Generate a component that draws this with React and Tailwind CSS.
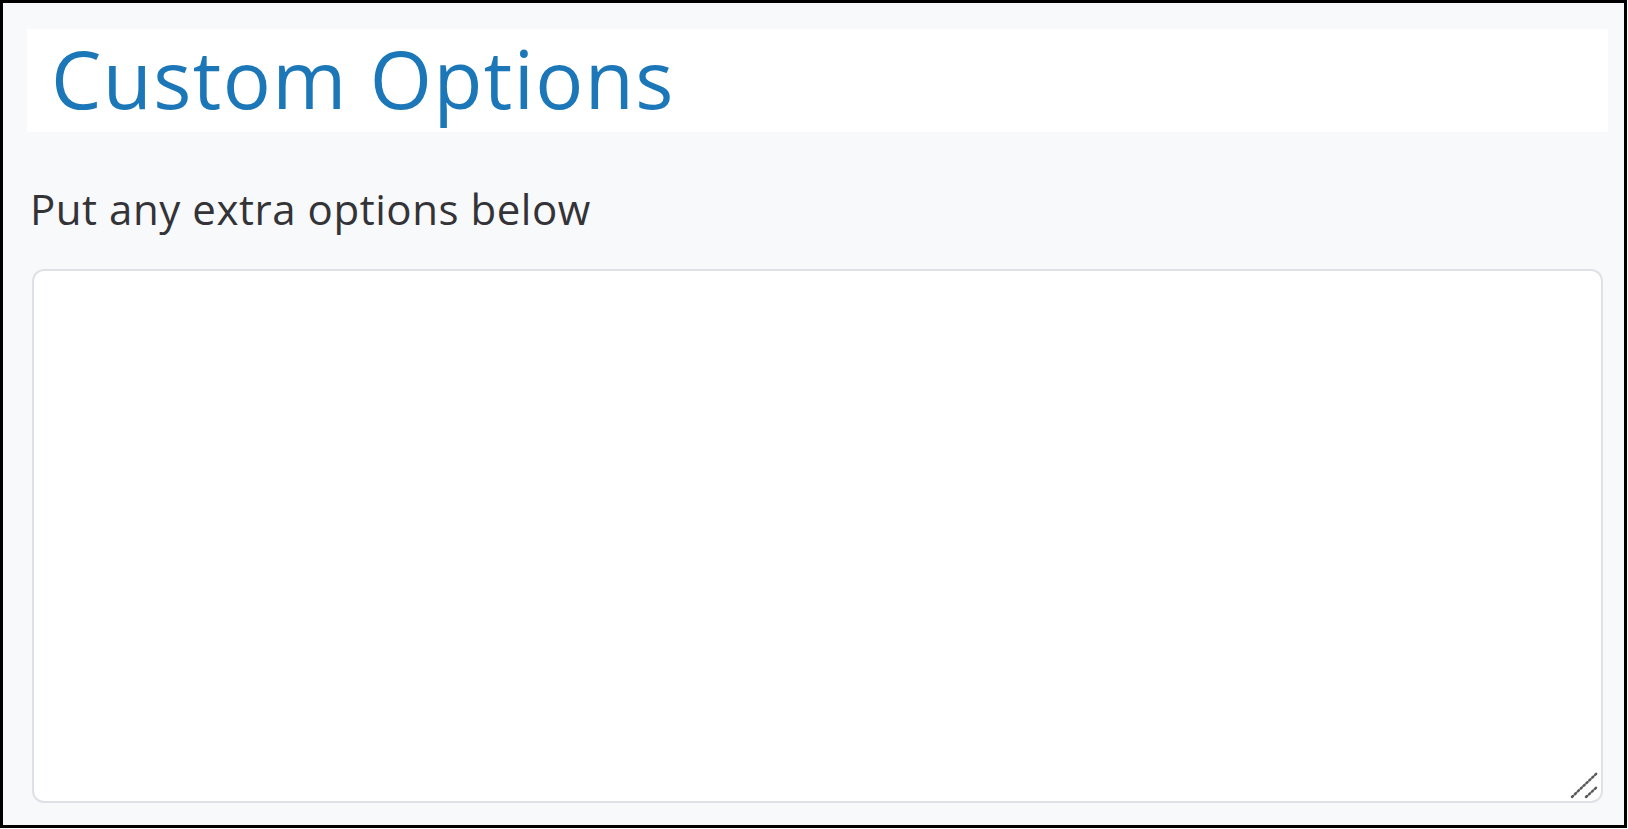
export default function App() {
  return (
    <div className="w-[1627px] h-[828px] border-[3px] border-black bg-[#f8f9fa] flex flex-col font-['Open_Sans',sans-serif]">
      {/* section heading */}
      <div className="mt-[26px] ml-[24px] mr-[16px] h-[103px] bg-white flex items-center pl-[24px] pb-[6px]">
        <h2 className="text-[80px] leading-none text-[#1b77b8] tracking-[1.4px]">Custom Options</h2>
      </div>

      <div className="ml-[27px] mr-[21px] flex flex-col">
        <label htmlFor="extra" className="mt-[52px] text-[42px] leading-[1.2] text-[#333338] tracking-[0.55px]">
          Put any extra options below
        </label>
        <div className="relative mt-[35px] ml-[2px]">
          <textarea
            id="extra"
            className="block h-[534px] w-full bg-white border-2 border-[#dee2e6] rounded-[12px] outline-none resize-none"
          />
          {/* resize grip */}
          <svg className="absolute right-0 bottom-0 w-[34px] h-[34px] pointer-events-none" viewBox="0 0 34 34">
            <g stroke="#5a5a5a" strokeWidth="2.5" strokeLinecap="round" strokeDasharray="1.5 2.5">
              <path d="M3 28 L28 4" />
              <path d="M17 28 L28 18" />
            </g>
          </svg>
        </div>
      </div>
    </div>
  );
}
